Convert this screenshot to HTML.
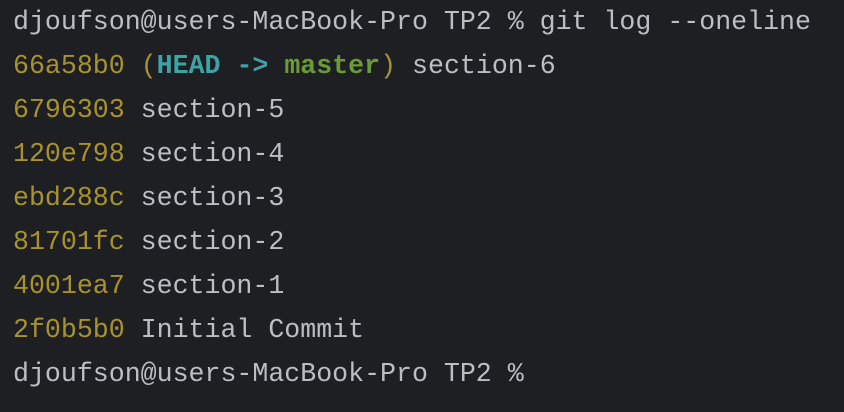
<!DOCTYPE html>
<html><head><style>
html,body{margin:0;padding:0;width:844px;height:412px;background:#1e1f22;overflow:hidden}
pre{margin:0;padding:0 0 0 13px;font-family:"Liberation Mono",monospace;font-size:26.6px;line-height:44px;color:#bcbec4;position:relative;top:0px;letter-spacing:0}
.y{color:#a8922f}.c{color:#3ca3a6;font-weight:bold}.g{color:#6a9a3a;font-weight:bold}
</style></head><body><pre>djoufson@users-MacBook-Pro TP2 % git log --oneline
<span class="y">66a58b0</span> <span class="y">(</span><span class="c">HEAD -&gt; </span><span class="g">master</span><span class="y">)</span> section-6
<span class="y">6796303</span> section-5
<span class="y">120e798</span> section-4
<span class="y">ebd288c</span> section-3
<span class="y">81701fc</span> section-2
<span class="y">4001ea7</span> section-1
<span class="y">2f0b5b0</span> Initial Commit
djoufson@users-MacBook-Pro TP2 %</pre></body></html>
